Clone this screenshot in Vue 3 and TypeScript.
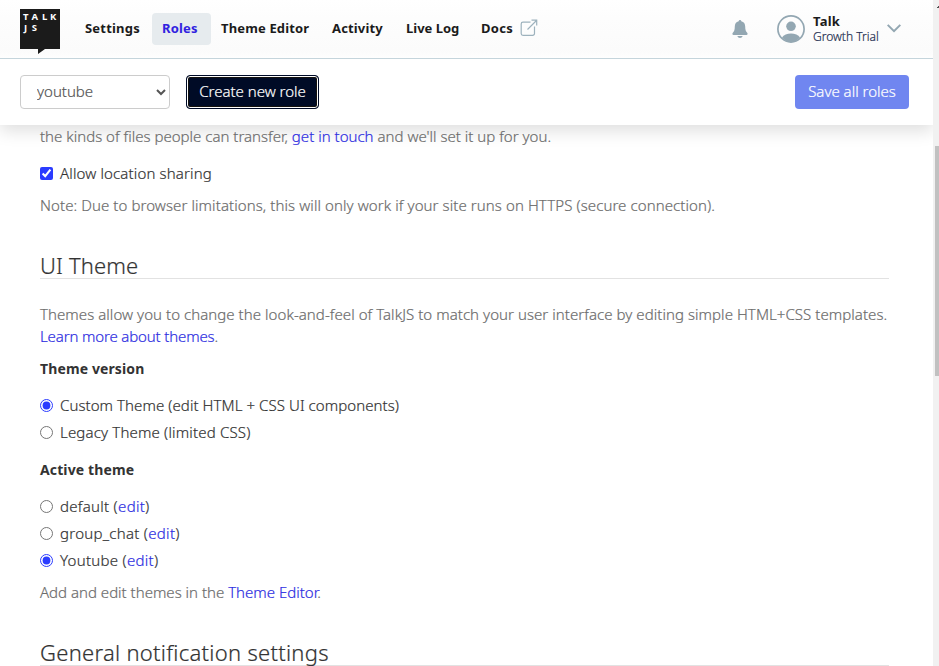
<script setup lang="ts">
import { ref } from 'vue'

interface NavItem {
  label: string
  cls: string
}

interface Theme {
  name: string
  value: string
}

const navItems: NavItem[] = [
  { label: 'Settings', cls: 'nav-settings' },
  { label: 'Roles', cls: 'nav-active' },
  { label: 'Theme Editor', cls: '' },
  { label: 'Activity', cls: '' },
  { label: 'Live Log', cls: 'nav-live' },
]

const themes: Theme[] = [
  { name: 'default', value: 'default' },
  { name: 'group_chat', value: 'group_chat' },
  { name: 'Youtube', value: 'youtube' },
]

const role = ref('youtube')
const locationSharing = ref(true)
const themeVersion = ref('custom')
const activeTheme = ref('youtube')
</script>

<template>
  <div class="page">
    <header class="header">
      <nav class="nav">
        <svg class="logo" width="40" height="45" viewBox="0 0 40 45">
          <path d="M0 0H40V40H25L18 45V40H0Z" fill="#1b1b1b" />
          <text x="3 11.5 22 30" y="11.2">TALK</text>
          <text x="4 11.7" y="22.2">JS</text>
        </svg>
        <a v-for="item in navItems" :key="item.label" class="nav-link" :class="item.cls">{{ item.label }}</a>
        <a class="nav-link nav-docs">Docs</a>
        <svg class="external" width="18" height="18" viewBox="0 0 18 18" fill="none" stroke="#9db2bd" stroke-width="1.2">
          <path d="M10.5 3.2H3A1.8 1.8 0 0 0 1.200 5V14.500A1.800 1.800 0 0 0 3 16.300H12.700A1.800 1.800 0 0 0 14.500 14.500V7.500" />
          <path d="M7.500 10.500L16.500 1.500M11.500 1.200H16.700V6.500" />
        </svg>
        <svg class="bell" width="16" height="18" viewBox="0 0 16 18" fill="#93a7b2">
          <path d="M8 0C8.800 0 9.300.600 9.300 1.300C11.900 1.900 13.200 3.900 13.200 6.500C13.200 10.200 13.900 11.500 15.200 12.700C16 13.500 15.600 15 14.500 15H1.500C.400 15 0 13.500.800 12.700C2.100 11.500 2.800 10.200 2.800 6.500C2.800 3.900 4.100 1.900 6.700 1.300C6.700.600 7.200 0 8 0ZM5.300 16H10.700C10.200 17.200 9.200 18 8 18C6.800 18 5.800 17.200 5.300 16Z" />
        </svg>
        <svg class="avatar" width="28" height="28" viewBox="0 0 28 28">
          <circle cx="14" cy="14" r="13.100" fill="none" stroke="#93a7b2" stroke-width="1.700" />
          <circle cx="14" cy="11.300" r="4.800" fill="#93a7b2" />
          <path d="M5 22.500C8 17 20 17 23 22.500C18 28.500 10 28.500 5 22.500Z" fill="#93a7b2" />
        </svg>
        <div class="account">
          <span class="account-name">Talk</span>
          <span class="account-plan">Growth Trial</span>
        </div>
        <svg class="chevron" width="14" height="9" viewBox="0 0 14 9" fill="none" stroke="#93a7b2" stroke-width="2">
          <path d="M.700.900L7 7.200L13.300.900" />
        </svg>
      </nav>
      <div class="toolbar">
        <select v-model="role" class="role-select">
          <option value="youtube">youtube</option>
        </select>
        <button class="btn btn-create">Create new role</button>
        <button class="btn btn-save">Save all roles</button>
      </div>
    </header>

    <main class="content">
      <p class="muted transfer">the kinds of files people can transfer, <a>get in touch</a> and we'll set it up for you.</p>
      <label class="choice location">
        <input v-model="locationSharing" type="checkbox" />
        <span class="t-allow">Allow location sharing</span>
      </label>
      <p class="muted note">Note: Due to browser limitations, this will only work if your site runs on HTTPS (secure connection).</p>

      <h2 class="title-theme">UI Theme</h2>
      <p class="muted intro">
        <span class="intro-text">Themes allow you to change the look-and-feel of TalkJS to match your user interface by editing simple HTML+CSS templates.</span>
        <span class="learn"><a>Learn more about themes</a>.</span>
      </p>

      <h3>Theme version</h3>
      <div class="choices">
        <label class="choice">
          <input v-model="themeVersion" type="radio" name="version" value="custom" />
          <span class="t-custom">Custom Theme (edit HTML + CSS UI components)</span>
        </label>
        <label class="choice">
          <input v-model="themeVersion" type="radio" name="version" value="legacy" />
          <span class="t-legacy">Legacy Theme (limited CSS)</span>
        </label>
      </div>

      <h3>Active theme</h3>
      <div class="choices">
        <label v-for="theme in themes" :key="theme.value" class="choice">
          <input v-model="activeTheme" type="radio" name="theme" :value="theme.value" />
          <span class="t-theme">{{ theme.name }} (<a>edit</a>)</span>
        </label>
      </div>
      <p class="muted editor-note">Add and edit themes in the <a>Theme Editor</a>.</p>

      <h2 class="title-general">General notification settings</h2>
    </main>

    <div class="scrollbar">
      <div class="scroll-arrow"></div>
      <div class="scroll-thumb"></div>
    </div>
  </div>
</template>

<style>
body {
  background: #fff;
  overflow: hidden;
}
</style>

<style scoped>
* {
  box-sizing: border-box;
}

.page {
  position: relative;
  width: 939px;
  height: 666px;
  overflow: hidden;
  font-family: 'Noto Sans', 'Open Sans', sans-serif;
  font-size: 15px;
  font-weight: 300;
  line-height: 22px;
  color: #333;
  background: #fff;
  -webkit-text-stroke: 0.2px;
}

.header {
  width: 933px;
  height: 125px;
  background: #fff;
  box-shadow: 0 6px 16px rgba(0, 0, 0, 0.13);
}

.nav {
  display: flex;
  align-items: flex-start;
  height: 59px;
  padding-left: 20px;
  background: linear-gradient(#fff 0, #fdfdfd 18px, #fbfbfb 50px, #fefefe 58px);
  border-bottom: 1px solid #c5d5dc;
}

.logo {
  margin-top: 9px;
  margin-right: 15px;
  flex: none;
}

.logo text {
  font: 700 9.5px 'Noto Sans', sans-serif;
  fill: #fff;
}

.nav-link {
  height: 32px;
  margin-top: 13px;
  padding: 0 10px;
  border-radius: 4px;
  font-size: 13px;
  font-weight: 700;
  line-height: 31px;
  letter-spacing: 0.15px;
  color: #1b1b1b;
  white-space: nowrap;
  -webkit-text-stroke: 0;
}

.nav-settings {
  width: 77px;
  letter-spacing: 0.2px;
}

.nav-active {
  width: 59px;
  color: #3022e0;
  background: #e6ebee;
}

.nav-active + .nav-link {
  width: 111px;
}

.nav-active + .nav-link + .nav-link {
  width: 74px;
}

.nav-live {
  width: 75px;
  letter-spacing: 0;
}

.nav-docs {
  width: 49px;
  padding-right: 0;
  letter-spacing: 0.3px;
}

.external {
  margin-top: 19px;
}

.bell {
  margin: 20px 0 0 194px;
}

.avatar {
  margin: 15px 0 0 29px;
}

.account {
  display: flex;
  flex-direction: column;
  width: 66px;
  margin: 14px 0 0 8px;
  white-space: nowrap;
}

.account-name {
  font-size: 13px;
  font-weight: 700;
  line-height: 15px;
  letter-spacing: 0.2px;
  color: #1b1b1b;
  -webkit-text-stroke: 0;
}

.account-plan {
  font-size: 12px;
  line-height: 15px;
  color: #1d2d50;
}

.chevron {
  margin: 24px 0 0 8px;
}

.toolbar {
  display: flex;
  align-items: flex-start;
  height: 66px;
  padding: 16px 24px 0 20px;
}

.role-select {
  width: 150px;
  height: 34px;
  padding: 0 0 2px 12px;
  border: 1px solid #ccc;
  border-radius: 4px;
  background: #fff;
  font: inherit;
  color: #555;
}

.btn {
  height: 34px;
  padding: 0 0 2px;
  border: 0;
  border-radius: 4px;
  font: inherit;
  color: #fff;
  text-align: center;
  white-space: nowrap;
}

.btn-create {
  width: 133px;
  margin-left: 16px;
  background: #000b26;
  border: 1px solid #000b26;
  box-shadow: inset 0 0 0 1px #fff, inset 0 0 0 2px #15130f;
}

.btn-save {
  width: 114px;
  margin-left: auto;
  background: #7086f0;
}

.content {
  display: flex;
  flex-direction: column;
  width: 929px;
  padding: 0 40px;
}

p,
h2,
h3 {
  margin: 0;
}

a {
  color: #2d2de1;
}

.muted {
  color: #6c6c6c;
}

.choice {
  display: flex;
  align-items: flex-start;
  height: 22px;
  white-space: nowrap;
}

.choice input {
  flex: none;
  width: 13px;
  height: 13px;
  margin: 5px 7px 0 0;
  accent-color: #2b3cff;
}

.transfer {
  letter-spacing: 0.01px;
}

.location {
  margin-top: 15px;
}

.note {
  margin-top: 10px;
  letter-spacing: 0.085px;
}

h2 {
  width: 849px;
  height: 30px;
  border-bottom: 1px solid #e2e2e2;
  font-size: 22px;
  font-weight: 300;
  line-height: 32px;
}

.title-theme {
  margin-top: 33px;
  letter-spacing: 0.15px;
}

.intro {
  display: flex;
  flex-direction: column;
  margin-top: 24px;
  white-space: nowrap;
}

.intro-text {
  letter-spacing: 0.055px;
}

.learn {
  letter-spacing: -0.14px;
}

h3 {
  margin-top: 11px;
  font-size: 14px;
  font-weight: 700;
  line-height: 22px;
  letter-spacing: 0.12px;
  -webkit-text-stroke: 0;
}

.choices {
  display: flex;
  flex-direction: column;
  gap: 5px;
  margin-top: 14px;
}

.choices + h3 {
  margin-top: 16px;
}

.t-allow {
  letter-spacing: 0.14px;
}

.t-custom {
  letter-spacing: 0.07px;
}

.t-legacy {
  letter-spacing: 0.17px;
}

.t-theme {
  letter-spacing: 0.28px;
}

.editor-note {
  margin-top: 10px;
}

.title-general {
  margin-top: 33px;
  letter-spacing: 0.28px;
}

.scrollbar {
  position: absolute;
  top: 0;
  right: 0;
  width: 6px;
  height: 666px;
  padding-left: 2px;
  background: #f1f1f1;
}

.scroll-arrow {
  width: 4px;
  height: 146px;
  background: linear-gradient(135deg, transparent 50%, #505050 50%) 2px 6px / 2px 2px no-repeat;
}

.scroll-thumb {
  width: 4px;
  height: 230px;
  background: #c1c1c1;
}
</style>
